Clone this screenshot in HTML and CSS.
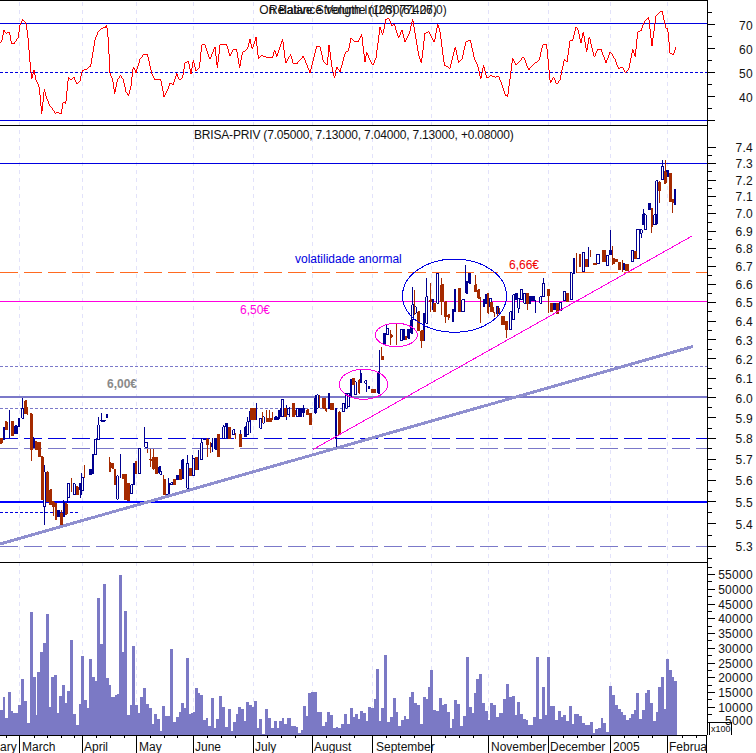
FILE: index.html
```html
<!DOCTYPE html>
<html lang="en">
<head>
    <meta charset="UTF-8">
    <title>BRISA-PRIV chart</title>
    <link rel="stylesheet" href="styles.css">
</head>
<body>
<svg class="chart" width="756" height="753" viewBox="0 0 756 753">
    <!-- month gridlines -->
    <path class="grid" d="M19.5 2V735M82.5 2V735M136.5 2V735M193.5 2V735M253.5 2V735M312.5 2V735M372.5 2V735M431.5 2V735M488.5 2V735M548.5 2V735M610.5 2V735M667.5 2V735"/>

    <!-- RSI levels -->
    <path class="level-blue" d="M0 23.5H707M0 120.5H707"/>
    <path class="level-blue short-dash" d="M0 72.5H707"/>
    <g transform="translate(0,0) scale(.33333)">
        <polyline class="rsi" points="0,130 5,125 12,90 18,100 28,95 35,132 42,132 55,112 60,75 68,58 77,67 83,100 90,185 95,238 102,210 108,240 118,262 125,342 133,268 140,295 150,318 160,330 165,340 175,337 183,343 190,305 197,312 205,232 215,240 221,230 231,253 240,242 247,212 260,208 272,198 285,120 295,95 305,85 316,83 320,76 325,120 330,220 338,238 344,282 352,240 362,226 370,240 378,275 385,287 392,265 400,200 408,218 420,178 430,165 443,165 455,220 465,240 482,237 492,290 503,270 510,250 520,254 530,220 538,240 548,232 555,190 565,183 573,222 580,180 588,212 598,205 605,135 615,135 630,178 645,140 652,205 660,135 680,133 690,168 700,148 710,150 719,205 727,158 742,148 750,118 757,148 768,112 775,175 785,166 800,172 818,172 824,150 830,170 848,118 857,190 872,163 880,192 890,192 910,168 930,218 950,138 960,140 970,183 982,195 987,135 997,208 1004,235 1010,200 1020,215 1037,155 1045,153 1053,115 1062,123 1075,125 1085,103 1095,187 1100,155 1110,180 1118,196 1128,175 1140,82 1148,105 1158,58 1166,55 1176,78 1183,72 1196,115 1206,90 1215,127 1228,100 1238,58 1246,105 1255,160 1264,190 1275,100 1286,95 1303,127 1313,72 1320,95 1333,195 1350,205 1366,140 1376,188 1386,178 1398,125 1411,120 1423,175 1433,195 1442,238 1451,195 1460,235 1473,226 1486,232 1496,228 1508,260 1516,285 1523,290 1538,175 1548,195 1571,170 1586,210 1598,195 1618,180 1628,135 1640,135 1651,250 1661,230 1670,253 1680,240 1693,178 1701,185 1710,122 1718,120 1728,82 1733,85 1743,130 1750,95 1760,155 1768,110 1783,172 1793,148 1803,148 1818,188 1831,155 1846,180 1856,208 1866,200 1876,218 1886,208 1898,148 1906,170 1913,95 1923,92 1933,65 1946,52 1956,138 1968,48 1986,32 1998,85 2003,85 2010,158 2020,165 2028,140"/>
    </g>

    <!-- price levels -->
    <path class="level-blue" d="M0 163.5H707"/>
    <path class="level-orange long-dash" d="M0 272.5H707"/>
    <path class="level-magenta" d="M0 301.5H707"/>
    <path class="level-purple short-dash" d="M0 366.5H707"/>
    <path class="level-purple thick" d="M0 397H707"/>
    <path class="level-purple short-dash" d="M0 408.5H350"/>
    <path class="level-blue long-dash" d="M0 438.5H707"/>
    <path class="level-purple long-dash" d="M0 448.5H707"/>
    <path class="level-blue thick" d="M0 502H707"/>
    <path class="level-blue short-dash" d="M0 512.5H78"/>
    <path class="level-purple long-dash" d="M0 546.5H707"/>

    <!-- candles, x 0-250 -->
    <g class="candles" transform="translate(0,370) scale(.33333)">
        <path class="up-fill" d="M10 172h5V210h-5zM44 168h8V192h-8zM68 85V115M100 210h5V232h-5zM101 200V210M133 285V465M172 422h7V440h-7zM239 340h5V360h-5zM241 360V385M268 298h9V313h-9zM277 255h5V310h-5zM302 151h14V154h-14zM306 130V151M362 252V325M400 280h5V345h-5zM434 170V230M476 290h6V310h-6zM500 373h3V377h-3zM530 316h9V329h-9zM546 270h6V325h-6zM596 240V300M612 208h5V210h-5zM644 205h6V238h-6zM677 160h6V170h-6zM735 170h5V200h-5zM749 122V155"/>
        <path class="up-open" d="M28 120V205M55 145h5V170h-5zM65 115h6V145h-6zM130 305h6V410h-6zM190 390V440M190 398h5V440h-5zM203 342h6V382h-6zM204 340V400M220 342h6V375h-6zM245 322h5V362h-5zM246 310V375M285 208h5V255h-5zM293 165h5V210h-5zM296 140V165M319 135h5V142h-5zM350 318h5V388h-5zM392 345h6V372h-6zM415 235h7V310h-7zM434 218h9V232h-9zM480 306h5V313h-5zM505 340h5V372h-5zM506 325V340M512 339h6V344h-6zM560 280h6V355h-6zM562 255V280M578 265h6V317h-6zM578 255V265M602 218h6V270h-6zM605 205V218M634 222h5V230h-5zM637 205V245M668 170h6V205h-6zM671 165V170M680 165h4V205h-4zM698 180h6V195h-6zM722 180V200M740 155h6V195h-6zM743 140V155"/>
        <path class="down" d="M1 205h6V220h-6zM16 155h6V180h-6zM34 155h7V198h-7zM74 93h6V132h-6zM84 110V135M91 132h6V240h-6zM94 240V272M106 215h6V240h-6zM115 218h7V260h-7zM124 260h6V390h-6zM141 305h4V395h-4zM150 360h5V405h-5zM157 395h6V410h-6zM160 410V438M166 400h5V450h-5zM181 430h6V465h-6zM184 420V470M196 402h6V433h-6zM215 325V365M229 350h6V375h-6zM254 285V325M328 262V305M329 278h3V305h-3zM335 280h6V295h-6zM344 298h4V345h-4zM367 315h7V325h-7zM374 315h6V390h-6zM382 340h7V392h-7zM406 275h4V310h-4zM443 237V250M449 268h6V271h-6zM452 238V290M457 262h7V295h-7zM460 237V300M466 262h7V310h-7zM490 315V375M491 330h6V375h-6zM520 330h7V345h-7zM538 298h7V328h-7zM568 295h7V318h-7zM586 262h7V300h-7zM619 208h7V225h-7zM622 205V260M631 215V250M652 195h7V260h-7zM685 172h7V205h-7zM708 190V208M718 195h7V230h-7z"/>
    </g>

    <!-- candles, x 250-490 -->
    <g class="candles" transform="translate(250,240) scale(.33333)">
        <path class="up-fill" d="M1 505V580M20 488V540M74 530h8V540h-8zM92 505h5V530h-5zM110 495V540M148 505h7V530h-7zM194 475h5V520h-5zM235 460h5V505h-5zM259 505V622M301 418h5V470h-5zM350 430V455M383 395h6V460h-6zM389 330V395M401 280h6V315h-6zM459 270h5V300h-5zM474 268h5V295h-5zM482 240h6V280h-6zM520 220h5V303h-5zM607 208h5V245h-5zM647 75V160M656 100h6V130h-6zM740 200h6V215h-6zM706 165h5V190h-5z"/>
        <path class="up-open" d="M30 535h5V565h-5zM38 530h5V550h-5zM86 510V540M85 512h5V535h-5zM95 478h6V530h-6zM114 505h5V525h-5zM118 500V530M140 505h5V530h-5zM158 505h5V520h-5zM160 495V530M200 465h5V505h-5zM198 465V510M256 505h5V595h-5zM278 490h5V515h-5zM287 460h5V505h-5zM294 460h5V500h-5zM314 425h5V465h-5zM331 400h5V428h-5zM333 390V400M345 422h5V430h-5zM355 440h5V447h-5zM410 265h6V285h-6zM411 255V265M452 268h6V302h-6zM486 195h5V240h-5zM488 140V195M494 200h5V220h-5zM528 170h5V250h-5zM530 115V170M547 180h5V210h-5zM560 100h6V190h-6zM613 150h5V215h-5zM635 180h9V215h-9zM649 125h5V160h-5zM700 180h4V200h-4zM719 175h5V200h-5z"/>
        <path class="down" d="M2 505h14V540h-14zM38 515V550M50 510V545M51 535h14V545h-14zM60 510V545M68 515V540M104 505h6V530h-6zM128 490h6V530h-6zM136 510V525M170 510h6V525h-6zM179 520h6V555h-6zM209 465V505M218 475h9V505h-9zM228 505h3V514h-3zM242 490h9V510h-9zM266 515h5V585h-5zM308 415h6V435h-6zM326 420V460M327 420h2V460h-2zM365 448h12V459h-12zM395 320V360M397 350h4V360h-4zM422 270V315M424 285h3V292h-3zM439 248V315M466 290h4V300h-4zM494 150V225M503 215h6V272h-6zM512 272h9V303h-9zM515 303V325M539 180h6V185h-6zM541 130V215M551 190h5V215h-5zM572 135h9V185h-9zM575 115V225M584 185h6V230h-6zM586 230V250M593 225h6V232h-6zM595 232V240M626 145h6V215h-6zM674 135h6V155h-6zM676 105V135M683 150h6V175h-6zM692 170V250M713 160h3V220h-3zM722 190h6V215h-6zM734 215V230M749 205h1V225h-1z"/>
    </g>

    <!-- candles, x 490-680 -->
    <g class="candles" transform="translate(490,150) scale(.33333)">
        <path class="up-fill" d="M19 470h7V490h-7zM76 430h7V450h-7zM97 418V450M124 440h10V452h-10zM138 450V490M190 460h7V480h-7zM296 290V350M358 303h7V315h-7zM361 240V303M397 340h7V360h-7zM459 192h5V225h-5zM461 178V192M475 160h7V178h-7zM529 62h7V80h-7z"/>
        <path class="up-open" d="M59 485h6V540h-6zM68 435h6V510h-6zM83 445h6V475h-6zM85 475V488M91 420h6V450h-6zM101 430h6V460h-6zM118 440h4V460h-4zM149 440h6V460h-6zM158 400h6V440h-6zM161 385V400M208 458h7V483h-7zM220 425h7V452h-7zM241 368h6V450h-6zM250 325h5V370h-5zM277 308h7V365h-7zM319 315h10V342h-10zM349 318h7V348h-7zM424 302h7V335h-7zM441 238h8V325h-8zM451 240h6V250h-6zM454 250V265M464 195h5V240h-5zM491 195h10V225h-10zM497 92h6V222h-6zM514 50h7V90h-7zM517 30V50M553 120h5V165h-5z"/>
        <path class="down" d="M1 458h7V480h-7zM12 470V490M22 470V500M34 500h10V525h-10zM46 515h7V540h-7zM51 540V565M109 430h7V460h-7zM112 460V480M172 418h7V437h-7zM175 437V490M181 460h7V485h-7zM199 460h7V490h-7zM230 430h7V455h-7zM261 310V370M268 315h4V350h-4zM286 330h7V350h-7zM303 300V320M310 342h10V343h-10zM337 302h10V335h-10zM369 288V345M367 325h7V340h-7zM376 330h7V335h-7zM385 338h7V358h-7zM399 330V365M406 345h10V362h-10zM433 305h7V325h-7zM484 175h4V230h-4zM486 230V248M506 95h5V122h-5zM508 122V160M526 30V100M523 65h6V100h-6zM538 72h7V155h-7zM547 148h4V158h-4zM549 158V188"/>
    </g>

    <!-- trend lines and marks -->
    <line class="trend-thick" x1="0" y1="544" x2="693" y2="346.5"/>
    <line class="trend-magenta" x1="313" y1="449.5" x2="692" y2="236"/>
    <ellipse class="ring-blue" cx="454.5" cy="295.7" rx="52" ry="36.7"/>
    <ellipse class="ring-magenta" cx="396.3" cy="335" rx="21" ry="11.7"/>
    <ellipse class="ring-magenta" cx="363.5" cy="384.3" rx="24.2" ry="15"/>

    <!-- volume -->
    <g class="volume" transform="translate(0,560) scale(.33333)">
        <path d="M0 525V450H8V412H15V475H24V397H32V453H40V460H54V435H63V358H72V423H81V488H90V157H98V352H107V465H112V337H120V275H128V250H137V163H146V442H153V352H162V346H170V458H177V408H186V376H195V428H201V393H210V240H219V462H227V495H236V432H243V288H251V420H260V443H267V297H276V352H285V362H291V114H300V253H309V73H318V355H327V376H333V410H345V405H351V402H357V46H366V275H373V154H381V464H390V435H396V258H405V435H414V460H420V412H429V384H438V432H447V445H456V492H462V462H471V476H480V513H486V438H495V467H510V268H519V487H528V472H537V455H543V430H552V445H558V295H567V463H573V460H579V456H585V384H594V398H600V405H609V480H618V475H625V497H633V415H642V505H648V478H657V408H666V440H675V502H684V447H693V512H699V487H708V461H714V441H723V447H732V483H738V426H747V435H756V441H762V423H771V505H777V477H786V522H795V446H804V475H813V503H822V483H831V505H837V482H846V474H852V492H861V475H873V498H888V502H894V518H903V510H909V438H918V468H924V400H933V396H951V457H966V498H975V485H981V457H990V465H999V503H1008V500H1014V503H1023V492H1032V463H1041V492H1050V445H1059V472H1065V462H1074V478H1080V454H1089V460H1098V482H1104V440H1113V443H1122V417H1128V525Z"/>
    </g>
    <g class="volume" transform="translate(376,560) scale(.33333)">
        <path d="M0 525V327H9V482H15V444H24V285H33V485H42V472H51V414H60V455H66V497H75V481H84V468H90V478H99V412H105V396H114V430H123V436H132V493H141V411H150V416H156V382H162V330H171V449H180V454H189V414H198V435H204V432H213V455H222V504H228V478H234V421H243V432H252V497H261V467H270V291H279V441H288V460H294V400H300V358H309V342H318V429H327V454H336V480H342V429H351V435H360V471H369V458H381V418H390V372H399V411H408V408H417V465H423V427H432V463H441V477H450V481H456V496H471V472H480V291H489V476H498V381H507V465H513V291H522V438H537V479H546V454H555V472H561V466H570V482H579V438H588V491H594V462H609V469H618V490H627V494H636V496H642V486H651V519H657V507H666V503H675V474H681V489H690V516H699V378H708V405H717V435H726V447H735V456H741V465H750V480H759V473H765V461H774V449H780V400H789V478H798V451H807V400H813V390H822V430H831V482H840V457H846V382H855V351H864V448H870V297H879V331H888V350H894V362H903V525Z"/>
    </g>

    <!-- frame and axes -->
    <path class="frame" d="M0 .5H708M0 125.5H708M0 562.5H708M0 735.5H707M707.5 0V735"/>
    <path class="frame" d="M19.5 735V753M82.5 735V753M136.5 735V753M193.5 735V753M253.5 735V753M312.5 735V753M372.5 735V753M431.5 735V753M488.5 735V753M548.5 735V753M610.5 735V753M667.5 735V753M706.5 735V753"/>
    <path class="frame" d="M6.5 735v3M34.5 735v3M47.5 735v3M61.5 735v3M74.5 735v3M96.5 735v3M110.5 735v3M124.5 735v3M150.5 735v3M164.5 735v3M177.5 735v3M207.5 735v3M221.5 735v3M235.5 735v3M267.5 735v3M281.5 735v3M295.5 735v3M326.5 735v3M340.5 735v3M354.5 735v3M386.5 735v3M400.5 735v3M414.5 735v3M445.5 735v3M459.5 735v3M473.5 735v3M503.5 735v3M517.5 735v3M531.5 735v3M563.5 735v3M577.5 735v3M591.5 735v3M624.5 735v3M638.5 735v3M652.5 735v3M682.5 735v3M696.5 735v3"/>
    <path class="frame" d="M708 12.5h4M708 24.5h7M708 36.5h4M708 48.5h7M708 60.5h4M708 72.5h7M708 84.5h4M708 96.5h7M708 108.5h4M708 120.5h7"/>
    <path class="frame" d="M708 147.5h8M708 155.5h4M708 163.5h8M708 171.5h4M708 180.5h8M708 188.5h4M708 196.5h8M708 205.5h4M708 213.5h8M708 222.5h4M708 231.5h8M708 239.5h4M708 248.5h8M708 257.5h4M708 266.5h8M708 275.5h4M708 284.5h8M708 293.5h4M708 302.5h8M708 311.5h4M708 321.5h8M708 330.5h4M708 339.5h8M708 349.5h4M708 358.5h8M708 368.5h4M708 378.5h8M708 388.5h4M708 397.5h8M708 407.5h4M708 417.5h8M708 428.5h4M708 438.5h8M708 448.5h4M708 459.5h8M708 469.5h4M708 480.5h8M708 491.5h4M708 501.5h8M708 512.5h4M708 523.5h8M708 535.5h4M708 546.5h8M708 558.5h4"/>
    <path class="frame" d="M708 567.5h4M708 574.5h7M708 581.5h4M708 589.5h7M708 596.5h4M708 604.5h7M708 611.5h4M708 618.5h7M708 626.5h4M708 633.5h7M708 640.5h4M708 648.5h7M708 655.5h4M708 663.5h7M708 670.5h4M708 677.5h7M708 685.5h4M708 692.5h7M708 699.5h4M708 707.5h7M708 714.5h4M708 722.5h24M709.5 722V735M731.5 722V735"/>

    <!-- chart text -->
    <text class="label title" x="353" y="14">On Balance Volume (103077426,0)</text>
    <text class="label title" x="353" y="14">Relative Strength In(26) (61.07)</text>
    <text class="label tight" x="194" y="139">BRISA-PRIV (7.05000, 7.13000, 7.04000, 7.13000, +0.08000)</text>
    <text class="label grey" x="107" y="388">6,00€</text>
    <text class="label pink" x="240" y="314">6,50€</text>
    <text class="label red" x="509" y="269">6,66€</text>
    <text class="label navy" x="295" y="263">volatilidade anormal</text>

    <g class="axis-right">
        <text x="753" y="30">70</text>
        <text x="753" y="54">60</text>
        <text x="753" y="78">50</text>
        <text x="753" y="102">40</text>
        <text x="753" y="152">7.4</text>
        <text x="753" y="168">7.3</text>
        <text x="753" y="185">7.2</text>
        <text x="753" y="201">7.1</text>
        <text x="753" y="218">7.0</text>
        <text x="753" y="236">6.9</text>
        <text x="753" y="253">6.8</text>
        <text x="753" y="271">6.7</text>
        <text x="753" y="289">6.6</text>
        <text x="753" y="307">6.5</text>
        <text x="753" y="326">6.4</text>
        <text x="753" y="345">6.3</text>
        <text x="753" y="364">6.2</text>
        <text x="753" y="383">6.1</text>
        <text x="753" y="403">6.0</text>
        <text x="753" y="423">5.9</text>
        <text x="753" y="443">5.8</text>
        <text x="753" y="464">5.7</text>
        <text x="753" y="485">5.6</text>
        <text x="753" y="507">5.5</text>
        <text x="753" y="529">5.4</text>
        <text x="753" y="551">5.3</text>
        <text x="753" y="579">55000</text>
        <text x="753" y="594">50000</text>
        <text x="753" y="609">45000</text>
        <text x="753" y="623">40000</text>
        <text x="753" y="638">35000</text>
        <text x="753" y="653">30000</text>
        <text x="753" y="668">25000</text>
        <text x="753" y="682">20000</text>
        <text x="753" y="697">15000</text>
        <text x="753" y="712">10000</text>
        <text x="753" y="725">5000</text>
    </g>
    <text class="label small" x="711" y="732">x100</text>

    <g class="axis-bottom">
        <text x="0" y="751">ary</text>
        <text x="22" y="751">March</text>
        <text x="84" y="751">April</text>
        <text x="139" y="751">May</text>
        <text x="195" y="751">June</text>
        <text x="255" y="751">July</text>
        <text x="314" y="751">August</text>
        <text x="376" y="751">September</text>
        <text x="491" y="751">November</text>
        <text x="550" y="751">December</text>
        <text x="613" y="751">2005</text>
        <text x="669" y="751">Februa</text>
    </g>
</svg>
</body>
</html>
```

FILE: styles.css
```css
body {
    margin: 0;
    background: white;
}
.chart {
    display: block;
    font-family: "Liberation Sans", Arial, sans-serif;
    font-size: 12px;
}
.chart path, .chart line, .chart ellipse, .chart polyline {
    fill: none;
}
.grid {
    stroke: #e2e2fa;
    stroke-width: 1;
    stroke-dasharray: 4 4;
}
.level-blue { stroke: #0000e0; stroke-width: 1; }
.level-orange { stroke: #ff6a20; stroke-width: 1; }
.level-magenta { stroke: #ff00e0; stroke-width: 1; }
.level-purple { stroke: #7b79c9; stroke-width: 1; }
.thick { stroke-width: 2; }
.level-blue.thick { stroke: #0000ff; }
.short-dash { stroke-dasharray: 3 2; }
.long-dash { stroke-dasharray: 18 6; }
.rsi {
    stroke: #ff0000;
    stroke-width: 3;
    shape-rendering: crispEdges;
}
.candles path {
    stroke-width: 3;
    shape-rendering: crispEdges;
}
.chart .candles .up-fill { stroke: #000090; fill: #000090; }
.chart .candles .up-open { stroke: #000090; fill: white; }
.chart .candles .down { stroke: #a52a00; fill: #a52a00; }
.trend-thick {
    stroke: #8f8fcf;
    stroke-width: 3;
    shape-rendering: crispEdges;
}
.trend-magenta {
    stroke: #ff00e0;
    stroke-width: 1;
    shape-rendering: crispEdges;
}
.ring-blue { stroke: #0000e0; stroke-width: 1; shape-rendering: crispEdges; }
.ring-magenta { stroke: #ff00e0; stroke-width: 1; shape-rendering: crispEdges; }
.chart .volume path {
    fill: #7b79c5;
    shape-rendering: crispEdges;
}
.frame {
    stroke: black;
    stroke-width: 1;
    shape-rendering: crispEdges;
}
.label { fill: #111; }
.title { text-anchor: middle; }
.tight { letter-spacing: -.18px; }
.grey { fill: #8a8a8a; font-weight: bold; }
.pink { fill: #ff00e0; }
.red { fill: #f00000; }
.navy { fill: #0000e0; }
.small { font-size: 9px; }
.axis-right text {
    text-anchor: end;
    letter-spacing: .3px;
    fill: #111;
}
.axis-bottom text { fill: #111; }
```
